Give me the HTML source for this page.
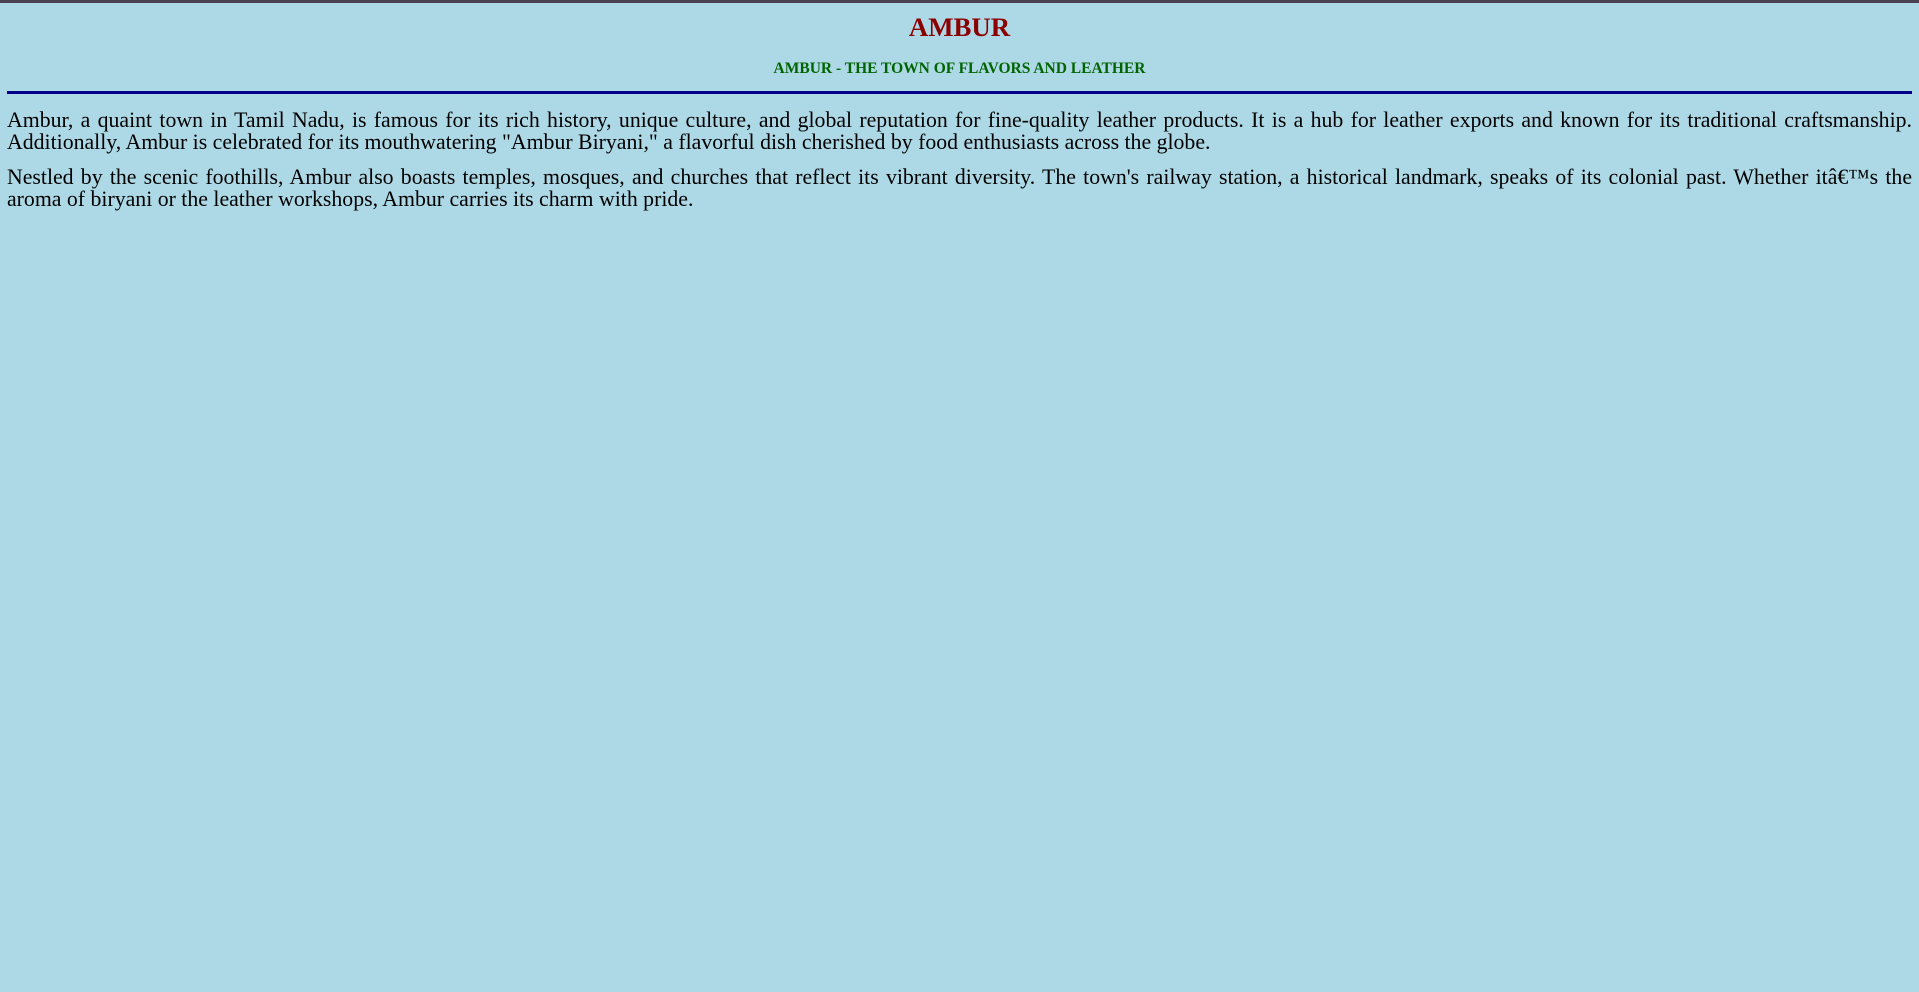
<!DOCTYPE html>
<html><head><meta charset="utf-8"><style>
html,body{margin:0;padding:0}
body{background:#add8e6;width:1919px;height:992px;border-top:3px solid #4a4052;box-sizing:border-box;font-family:"Liberation Serif",serif;overflow:hidden}
h1{margin:0;position:absolute;top:11px;left:0;width:1919px;text-align:center;color:#8b0000;font-size:26.8px;font-weight:bold;line-height:32px}
h4{margin:0;position:absolute;top:60px;left:0;width:1919px;text-align:center;color:#006400;font-size:15.5px;font-weight:bold;line-height:18px}
.hr{position:absolute;top:91px;left:7px;width:1905px;height:3px;background:#00008b}
.p{position:absolute;left:7px;width:1905px;font-size:21.8px;line-height:22px;color:#000}
.j{text-align:justify;text-align-last:justify}
</style></head><body>
<h1>AMBUR</h1>
<h4>AMBUR - THE TOWN OF FLAVORS AND LEATHER</h4>
<div class="hr"></div>
<div class="p" style="top:109px">
<div class="j">Ambur, a quaint town in Tamil Nadu, is famous for its rich history, unique culture, and global reputation for fine-quality leather products. It is a hub for leather exports and known for its traditional craftsmanship.</div>
<div>Additionally, Ambur is celebrated for its mouthwatering "Ambur Biryani," a flavorful dish cherished by food enthusiasts across the globe.</div>
</div>
<div class="p" style="top:166px">
<div class="j">Nestled by the scenic foothills, Ambur also boasts temples, mosques, and churches that reflect its vibrant diversity. The town's railway station, a historical landmark, speaks of its colonial past. Whether itâ€™s the</div>
<div>aroma of biryani or the leather workshops, Ambur carries its charm with pride.</div>
</div>
</body></html>
